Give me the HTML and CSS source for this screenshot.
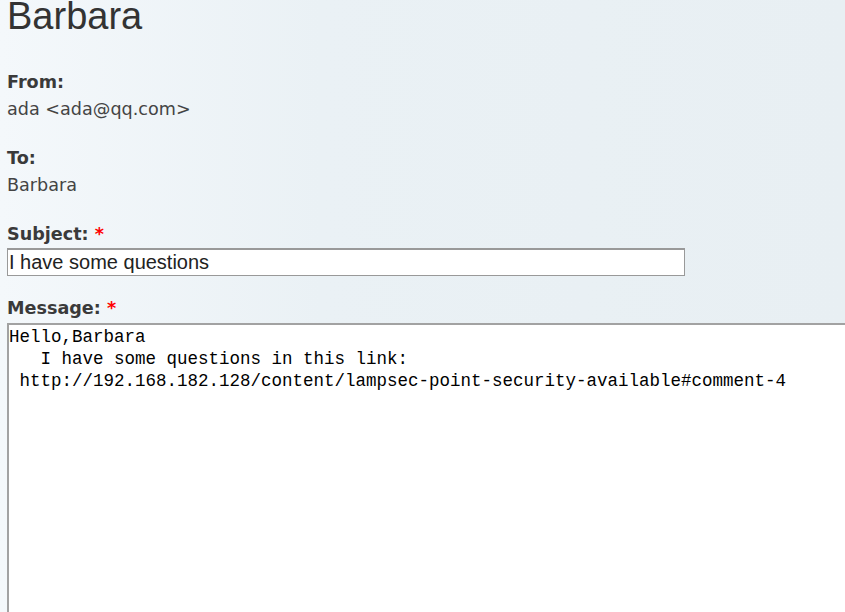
FILE: index.html
```html
<!DOCTYPE html>
<html>
<head>
<meta charset="utf-8">
<link rel="stylesheet" href="styles.css">
</head>
<body>
<div class="page">
  <h1 class="title">Barbara</h1>
  <form class="form">
    <div class="field">
      <div class="label">From:</div>
      <div class="value">ada &lt;ada@qq.com&gt;</div>
    </div>
    <div class="field">
      <div class="label">To:</div>
      <div class="value">Barbara</div>
    </div>
    <div class="field field-input">
      <label class="label" for="subject">Subject: <span class="req">*</span></label>
      <input id="subject" class="text-input" type="text" value="I have some questions">
    </div>
    <div class="field field-area">
      <label class="label" for="message">Message: <span class="req">*</span></label>
      <textarea id="message" class="text-area" spellcheck="false">Hello,Barbara
   I have some questions in this link:
 http://192.168.182.128/content/lampsec-point-security-available#comment-4</textarea>
    </div>
  </form>
</div>
</body>
</html>
```
FILE: styles.css
```css
html, body {
  margin: 0;
  padding: 0;
  height: 100%;
  overflow: hidden;
}
body {
  background: linear-gradient(to right, #f4f8fb 0px, #eaf1f5 320px, #e8eff3 845px);
  font-family: "DejaVu Sans", Verdana, sans-serif;
}
.page {
  padding-left: 7px;
}
.title {
  margin: 0;
  font-family: "Liberation Sans", Arial, sans-serif;
  font-weight: normal;
  font-size: 38px;
  line-height: 32px;
  color: #333;
}
.form {
  margin-top: 37px;
  display: flex;
  flex-direction: column;
}
.field {
  margin-bottom: 22px;
  display: flex;
  flex-direction: column;
}
.field-input {
  margin-bottom: 19px;
}
.label {
  font-size: 17.6px;
  line-height: 27px;
  font-weight: bold;
  color: #3a3a3a;
}
.req {
  color: #f00;
}
.value {
  font-size: 17.6px;
  line-height: 27px;
  color: #444;
}
.text-input {
  box-sizing: border-box;
  width: 678px;
  height: 28px;
  margin: 0;
  padding: 0 1px;
  border: 1px solid #999;
  border-top-width: 2px;
  background: #fff;
  font-family: "Liberation Sans", Arial, sans-serif;
  font-size: 20px;
  color: #222;
  outline: none;
}
.text-area {
  box-sizing: border-box;
  margin-top: 1px;
  width: 900px;
  height: 300px;
  padding: 1px 0 0 0;
  border: 2px solid #a2a2a2;
  background: #fff;
  font-family: "Liberation Mono", "Courier New", monospace;
  font-size: 17.5px;
  line-height: 22px;
  color: #000;
  resize: none;
  white-space: pre;
  overflow: hidden;
  outline: none;
}
```
